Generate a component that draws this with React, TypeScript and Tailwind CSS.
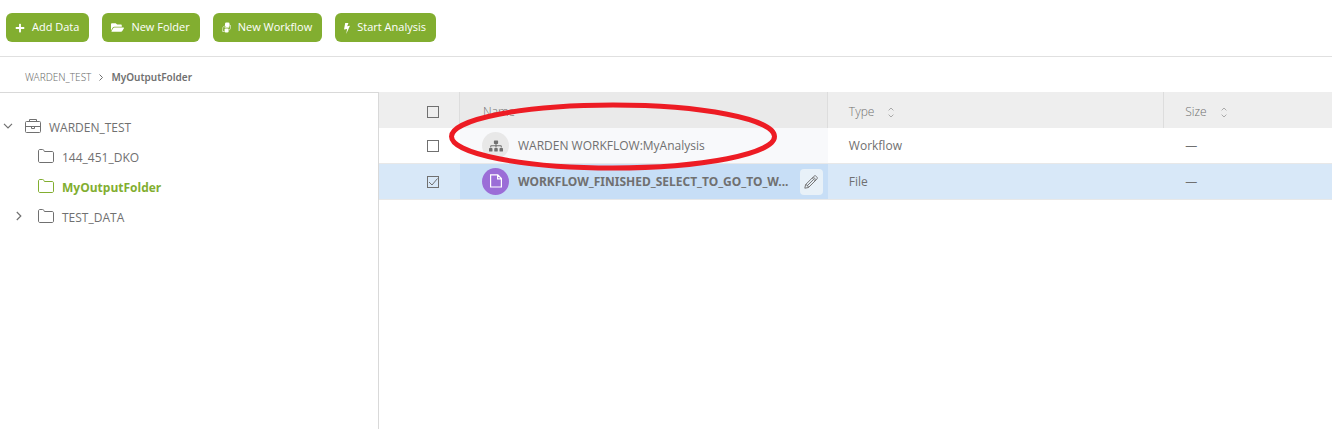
import type { ReactNode } from "react";
import { FaFolderOpen, FaPlus, FaSitemap } from "react-icons/fa";

function WorkflowIcon() {
  return (
    <svg width="9" height="11" viewBox="0 0 9 11" fill="none" aria-hidden="true">
      <rect x="3" y="0.5" width="4.6" height="4.6" rx="1.4" fill="#fff" />
      <rect x="2.6" y="6.4" width="4" height="4" rx="1.2" fill="#fff" />
      <path d="M2.8 4C0.8 4.4 0.6 6 0.6 7.4v2.1h1.8M8.4 3v3.4c0 1-.6 1.4-1.6 1.4" stroke="#fff" strokeOpacity="0.6" />
      <path d="M2.6 5.6h4.4" stroke="#fff" strokeOpacity="0.7" />
    </svg>
  );
}

function Bolt() {
  return (
    <svg className="mt-0.5" width="6" height="11" viewBox="0 0 6 11" fill="#fff" aria-hidden="true">
      <path d="M1.2 0h3.2L3.2 3.2 6 2.7 2.2 11l.9-5L0 6.6 1.2 0Z" />
    </svg>
  );
}

function Folder() {
  return (
    <svg className="mb-1 shrink-0" width="16" height="14" viewBox="0 0 16 14" fill="none" stroke="currentColor" aria-hidden="true">
      <path d="M0.5 12V2C0.5 1 1 0.5 2 0.5h2.6c.8 0 1 .4 1.3 1l.5 1h7.6c1 0 1.5.5 1.5 1.5v8c0 1-.5 1.5-1.5 1.5H2c-1 0-1.5-.5-1.5-1.5Z" />
    </svg>
  );
}

function Briefcase() {
  return (
    <svg className="mb-1 shrink-0" width="16" height="14" viewBox="0 0 16 14" fill="none" stroke="currentColor" aria-hidden="true">
      <rect x="0.5" y="2.5" width="15" height="11" rx="1" />
      <path d="M4.5 2.5v-2h7v2M0.5 7.5h15M6.5 8v1.5h3V8" />
    </svg>
  );
}

function Chevron({ open = false }: { open?: boolean }) {
  return open ? (
    <svg className="mb-1" width="10" height="6" viewBox="0 0 10 6" fill="none" stroke="currentColor" strokeWidth="1.2" aria-hidden="true">
      <path d="m1 .8 4 4 4-4" />
    </svg>
  ) : (
    <svg className="mb-1" width="6" height="10" viewBox="0 0 6 10" fill="none" stroke="currentColor" strokeWidth="1.2" aria-hidden="true">
      <path d="m.8 1 4 4-4 4" />
    </svg>
  );
}

function SortIcon() {
  return (
    <svg width="6" height="11" viewBox="0 0 6 11" fill="none" stroke="#aaa" aria-hidden="true">
      <path d="M.6 3.4 3 1l2.4 2.4M.6 7.6 3 10l2.4-2.4" />
    </svg>
  );
}

function Pencil() {
  return (
    <svg width="14" height="14" viewBox="0 0 14 14" fill="none" stroke="#777" aria-hidden="true">
      <path d="M.8 13.2 1.6 9.6 9.9 1.3c.8-.8 1.6-.7 2.3 0l.6.6c.7.7.7 1.5 0 2.3l-8.3 8.3-3.7.7ZM8.3 3l2.9 2.9M9.3 2l2.9 2.9M1.6 9.6c1.3-.2 1.6.3 1.5 1.4 1.1-.1 1.5.3 1.4 1.5M3.1 10.9 9.7 4.4" />
    </svg>
  );
}

function Check({ label, checked = false }: { label: string; checked?: boolean }) {
  return (
    <span className="grid size-3">
      <input
        type="checkbox"
        aria-label={label}
        defaultChecked={checked}
        className="peer col-start-1 row-start-1 size-3 appearance-none border border-[#707070]"
      />
      <svg className="pointer-events-none invisible col-start-1 row-start-1 size-3 peer-checked:visible" viewBox="0 0 12 12" fill="none" stroke="#707070" aria-hidden="true">
        <path d="m2 6 3 3 5.5-6.5" />
      </svg>
    </span>
  );
}

function ToolButton({ icon, children }: { icon: ReactNode; children: ReactNode }) {
  return (
    <button type="button" className="flex h-[29px] items-center gap-[7px] rounded-md bg-[#82ae30] pr-2.5 pl-[9px] text-[11px] text-white">
      {icon}
      {children}
    </button>
  );
}

function Heading({ sortable = false, children }: { sortable?: boolean; children: ReactNode }) {
  return (
    <button type="button" className="flex items-center gap-3.5 pt-1 font-light">
      {children}
      {sortable && <SortIcon />}
    </button>
  );
}

export default function App() {
  return (
    <div className="flex min-h-screen flex-col bg-white font-['Open_Sans','Noto_Sans',sans-serif] text-[#707070]">
      <header className="flex h-[57px] items-start gap-[13px] border-b border-[#e0e0e0] px-1.5 pt-[13px]">
        <ToolButton icon={<FaPlus size={10} />}>Add Data</ToolButton>
        <ToolButton icon={<FaFolderOpen size={13} />}>New Folder</ToolButton>
        <ToolButton icon={<WorkflowIcon />}>New Workflow</ToolButton>
        <ToolButton icon={<Bolt />}>Start Analysis</ToolButton>
      </header>

      <nav aria-label="Breadcrumb" className="flex h-[35px] items-center gap-2 px-[25px] pt-1.5 font-['Noto_Sans',sans-serif] text-[10px]">
        <a href="#root" className="font-light">WARDEN_TEST</a>
        <svg width="4" height="7" viewBox="0 0 4 7" fill="none" stroke="currentColor" aria-hidden="true">
          <path d="m.5.5 3 3-3 3" />
        </svg>
        <span className="font-semibold">MyOutputFolder</span>
      </nav>

      <div className="flex flex-1">
        <aside className="w-[379px] shrink-0 border-t border-r border-[#d9d9d9] pt-5 text-xs font-medium">
          <ul>
            <li>
              <div className="flex h-[30px] items-center gap-2 pl-[3px]">
                <button type="button" aria-label="Collapse WARDEN_TEST" className="flex w-3.5"><Chevron open /></button>
                <Briefcase />
                <span>WARDEN_TEST</span>
              </div>
              <ul>
                <li className="flex h-[30px] items-center gap-2 pl-[38px]"><Folder />144_451_DKO</li>
                <li className="flex h-[30px] items-center gap-2 pl-[38px] font-bold text-[#82ae30]"><Folder />MyOutputFolder</li>
                <li className="flex h-[30px] items-center gap-2 pl-4">
                  <button type="button" aria-label="Expand TEST_DATA" className="flex w-3.5"><Chevron /></button>
                  <Folder />TEST_DATA
                </li>
              </ul>
            </li>
          </ul>
        </aside>

        <main className="relative min-w-0 flex-1">
          <table className="w-full table-fixed border-separate border-spacing-0 text-left text-xs">
            <colgroup>
              <col className="w-[81px]" />
              <col className="w-[38.6%]" />
              <col className="w-[35.3%]" />
              <col />
            </colgroup>
            <thead>
              <tr className="h-9 bg-[#eee]">
                <th className="border-r border-[#ddd] pt-1 pl-12"><Check label="Select all" /></th>
                <th className="border-r border-[#ddd] bg-[#eaeaea] pl-[23px]"><Heading>Name</Heading></th>
                <th className="border-r border-[#ddd] pl-[21px]"><Heading sortable>Type</Heading></th>
                <th className="pl-[21px]"><Heading sortable>Size</Heading></th>
              </tr>
            </thead>
            <tbody>
              <tr className="h-9 *:border-b *:border-[#e8e8e8]">
                <td className="pl-12"><Check label="Select WARDEN WORKFLOW:MyAnalysis" /></td>
                <td className="bg-[#f8f9fb] pl-[22px]">
                  <div className="flex items-center gap-[9px]">
                    <span className="flex size-[27px] shrink-0 items-center justify-center rounded-full bg-[#e8e8e8]"><FaSitemap size={14} /></span>
                    <span>WARDEN WORKFLOW:MyAnalysis</span>
                  </div>
                </td>
                <td className="pl-[21px]">Workflow</td>
                <td className="pl-[21px]">—</td>
              </tr>
              <tr className="h-9 bg-[#d8e8f8] *:border-b *:border-[#e8e8e8]">
                <td className="pl-12"><Check label="Select WORKFLOW_FINISHED file" checked /></td>
                <td className="bg-[#c7def6] pr-[5px] pl-[22px]">
                  <div className="flex items-center">
                    <span className="mr-[9px] flex size-[27px] shrink-0 items-center justify-center rounded-full bg-[#9b6dd7]">
                      <svg className="mb-0.5" width="12" height="14" viewBox="0 0 12 14" fill="none" stroke="#fff" strokeWidth="1.2" aria-hidden="true">
                        <path d="M.6 1v12h10.8V4.6L7.8.8H.6ZM7.6 1v3.8h3.6" />
                      </svg>
                    </span>
                    <span className="min-w-0 flex-1 font-['Noto_Sans',sans-serif] font-bold whitespace-nowrap">WORKFLOW_FINISHED_SELECT_TO_GO_TO_W...</span>
                    <button type="button" aria-label="Rename" className="flex h-[26px] w-[23px] shrink-0 items-center justify-center rounded bg-[#e8f1f8]"><Pencil /></button>
                  </div>
                </td>
                <td className="pl-[21px]">File</td>
                <td className="pl-[21px]">—</td>
              </tr>
            </tbody>
          </table>
          <svg className="pointer-events-none absolute top-2.5 left-[70px]" width="330" height="70" viewBox="0 0 330 70" fill="none" aria-hidden="true">
            <ellipse cx="164" cy="34.5" rx="161.5" ry="31.5" stroke="#ed1c24" strokeWidth="5" />
          </svg>
        </main>
      </div>
    </div>
  );
}
